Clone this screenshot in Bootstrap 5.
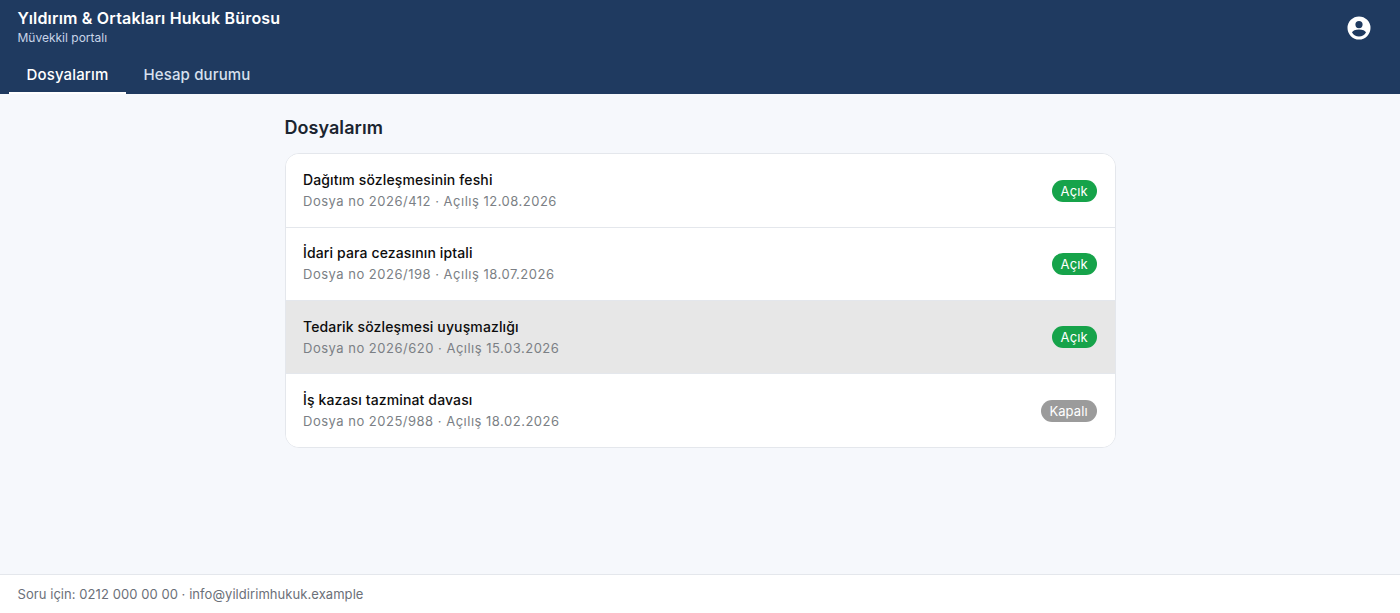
<!DOCTYPE html>
<html lang="tr">
<head>
<meta charset="utf-8">
<title>Müvekkil portalı</title>
<link href="https://cdn.jsdelivr.net/npm/bootstrap@5.3.0/dist/css/bootstrap.min.css" rel="stylesheet">
<style>
html,body{height:100%}
body{font-family:Inter,"Noto Sans",sans-serif;background:#f6f8fc;color:#1b1f24;height:613px;overflow:hidden}
.portal-top{background:#1f3a60;height:94px;padding:0 9px}
.brand-row{height:53px;padding:8px 9px 0 8.5px}
.brand-name{font-size:16px;font-weight:600;line-height:20px;letter-spacing:.18px;color:#fff}
.brand-sub{font-size:12px;line-height:20px;color:#c9d5e8}
.acct{margin-right:11.5px;margin-top:8px}
.tab-row{height:41px}
.tab-link{font-size:15px;font-weight:500;letter-spacing:.15px;padding:2px 17.5px 0;line-height:39px;height:41px;color:#d7e0ee;text-decoration:none;display:block;border-bottom:2px solid transparent}
.tab-link.active{color:#fff;border-bottom-color:#fff}
.main-col{width:831px;margin:0 auto;padding-top:23px}
.page-head{font-size:18px;font-weight:600;line-height:22px;margin:0 0 15px;letter-spacing:.05px;color:#1b2530}
.case-box{border:1px solid #e4e7ec;border-radius:14px;overflow:hidden;background:#fff;margin-top:-.6px}
.case-row{height:73.25px;padding:0 18px 0 17.5px;background:#fff;color:#000;text-decoration:none;border-bottom:1px solid #e4e7ec}
.case-row:last-child{border-bottom:0}
.case-row.hovered{background:#e7e7e7}
.case-title{font-size:14px;font-weight:450;line-height:20px;letter-spacing:.13px;color:#0d0d0d}
.case-meta{font-size:13px;line-height:20px;letter-spacing:.5px;color:#7b7f85;margin-top:1px}
.state-pill{font-size:13px;line-height:22px;height:22px;padding:0 8.8px;letter-spacing:.1px;border-radius:11px;color:#fff}
.state-open{background:#16a34a}
.state-closed{background:#9b9b9b}
.portal-foot{position:absolute;left:0;right:0;top:574px;height:39px;background:#fff;border-top:1px solid #e4e7ec;font-size:13px;line-height:38px;letter-spacing:.06px;padding-left:17.5px;color:#6b7079}
</style>
</head>
<body>
<header class="portal-top">
  <div class="brand-row d-flex justify-content-between align-items-start">
    <div>
      <div class="brand-name">Yıldırım &amp; Ortakları Hukuk Bürosu</div>
      <div class="brand-sub">Müvekkil portalı</div>
    </div>
    <svg class="acct" width="24" height="24" viewBox="0 0 24 24" fill="#fff" aria-hidden="true"><path fill-rule="evenodd" d="M12 0.5a11.5 11.5 0 1 0 0 23a11.5 11.5 0 0 0 0-23zM12 5a3.6 3.6 0 1 1 0 7.2a3.6 3.6 0 0 1 0-7.2zM12 13.6c3.6 0 6.3 1.3 7 2.9c-1.6 2.5-4 4-7 4s-5.4-1.5-7-4c.7-1.6 3.4-2.9 7-2.9z"/></svg>
  </div>
  <nav class="tab-row d-flex">
    <a class="tab-link active" href="#">Dosyalarım</a>
    <a class="tab-link" href="#">Hesap durumu</a>
  </nav>
</header>
<main class="main-col">
  <h1 class="page-head">Dosyalarım</h1>
  <div class="case-box">
    <a href="#" class="case-row d-flex justify-content-between align-items-center">
      <div><div class="case-title">Dağıtım sözleşmesinin feshi</div><div class="case-meta">Dosya no 2026/412 · Açılış 12.08.2026</div></div>
      <span class="state-pill state-open">Açık</span>
    </a>
    <a href="#" class="case-row d-flex justify-content-between align-items-center">
      <div><div class="case-title">İdari para cezasının iptali</div><div class="case-meta">Dosya no 2026/198 · Açılış 18.07.2026</div></div>
      <span class="state-pill state-open">Açık</span>
    </a>
    <a href="#" class="case-row hovered d-flex justify-content-between align-items-center">
      <div><div class="case-title">Tedarik sözleşmesi uyuşmazlığı</div><div class="case-meta">Dosya no 2026/620 · Açılış 15.03.2026</div></div>
      <span class="state-pill state-open">Açık</span>
    </a>
    <a href="#" class="case-row d-flex justify-content-between align-items-center">
      <div><div class="case-title">İş kazası tazminat davası</div><div class="case-meta">Dosya no 2025/988 · Açılış 18.02.2026</div></div>
      <span class="state-pill state-closed">Kapalı</span>
    </a>
  </div>
</main>
<footer class="portal-foot">Soru için: 0212 000 00 00 · info@yildirimhukuk.example</footer>
<script src="https://cdn.jsdelivr.net/npm/bootstrap@5.3.0/dist/js/bootstrap.bundle.min.js"></script>
</body>
</html>
